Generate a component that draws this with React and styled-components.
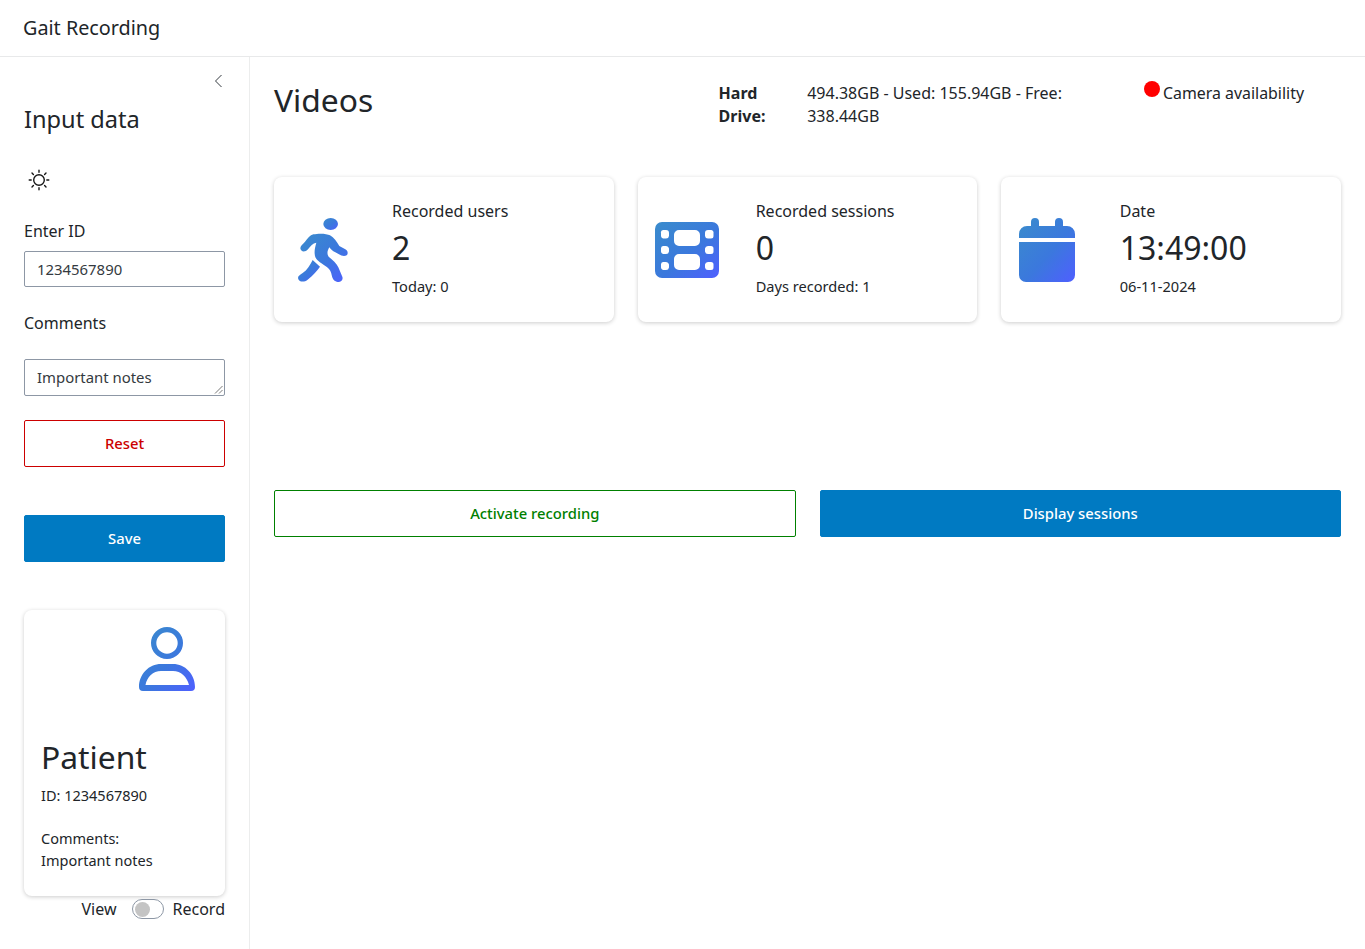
import React from "react";
import styled, { createGlobalStyle } from "styled-components";

const Global = createGlobalStyle`
  html, body { margin: 0; padding: 0; background: #fff; }
  body { font-family: "Noto Sans", "Open Sans", sans-serif; color: #212529; font-size: 16px; line-height: 24px; }
  * { box-sizing: border-box; }
`;

const Page = styled.div`
  width: 1365px; height: 949px; display: flex; flex-direction: column; overflow: hidden;
`;
const TopBar = styled.header`
  height: 57px; flex: none; border-bottom: 1px solid #e8e9ea; padding: 14px 0 0 23px;
  font-size: 19.8px; line-height: 27px;
`;
const Body = styled.div`
  flex: 1; display: flex; min-height: 0;
`;
const Sidebar = styled.aside`
  width: 250px; flex: none; border-right: 1px solid #eceded; padding: 14px 24px 0 24px; display: flex; flex-direction: column;
`;
const Collapse = styled.button`
  all: unset; align-self: flex-end; width: 14px; height: 20px; margin-right: -1px; display: flex; color: #343a40;
`;
const SideTitle = styled.h2`
  margin: 12px 0 0; font-size: 23.6px; line-height: 32px; font-weight: 400;
`;
const ThemeIcon = styled.div`
  margin: 34px 0 0 4px; height: 22px; width: 22px; color: #161616;
`;
const FieldLabel = styled.label`
  display: block; line-height: 24px; margin-top: ${p => p.$top}px;
`;
const TextInput = styled.div`
  height: ${p => p.$h}px; margin-top: ${p => p.$top}px; border: 1px solid #8d97a5; border-radius: 2px;
  padding: ${p => p.$py}px 12px; font-size: 14.9px; line-height: 20px; color: #343a40; position: relative;
`;
const Grip = styled.svg`
  position: absolute; right: 1px; bottom: 1px; width: 9px; height: 9px;
`;
const ActionButton = styled.button`
  display: flex; align-items: center; justify-content: center; width: 100%; height: 47px;
  margin-top: ${p => p.$top || 0}px; font: 500 14.8px/20px "Noto Sans", sans-serif; border-radius: 2px;
  border: 1px solid ${p => p.$color}; padding: 0 0 2px;
  background: ${p => (p.$solid ? p.$color : "#fff")};
  color: ${p => (p.$solid ? "#fff" : p.$color)};
`;
const PatientCard = styled.section`
  margin-top: 48px; height: 286px; border-radius: 8px; background: #fff;
  box-shadow: 0 1px 4px rgba(0,0,0,.2); padding: 17px 17px 0; display: flex; flex-direction: column;
`;
const PatientIconWrap = styled.div`
  height: 65px; margin-left: -2px; padding-left: 100px;
  svg { display: block; }
`;
const PatientName = styled.div`
  margin-top: 43px; font-size: 31.8px; line-height: 44px;
`;
const PatientText = styled.div`
  font-size: 14.5px; line-height: 22px; margin-top: ${p => p.$top}px;
`;
const ToggleRow = styled.div`
  display: flex; justify-content: flex-end; align-items: center; gap: 15px; height: 26px;
`;
const ToggleTrack = styled.span`
  width: 32px; height: 20px; border: 1px solid #8d97a5; border-radius: 10px; display: flex; align-items: center; padding-left: 2px; margin: 0 -6px 0 0;
`;
const ToggleKnob = styled.span`
  width: 15px; height: 15px; border-radius: 50%; background: #c4c4c4;
`;
const Main = styled.main`
  flex: 1; padding: 24px 24px 0; min-width: 0;
`;
const Header = styled.div`
  display: grid; grid-template-columns: 444.6px 425.4px 1fr; height: 96px;
`;
const PageTitle = styled.h1`
  margin: -1px 0 0; font-size: 31.8px; line-height: 40px; font-weight: 400;
`;
const Drive = styled.div`
  display: grid; grid-template-columns: 88.6px 270px; line-height: 23px; margin-top: 1px;
`;
const DriveLabel = styled.b` font-weight: 700; `;
const Camera = styled.div`
  display: flex; align-items: flex-start; line-height: 24px; font-size: 15.9px;
`;
const Dot = styled.span`
  width: 16px; height: 16px; border-radius: 50%; background: #ff0000; flex: none; margin: 0 3px 0 0;
`;
const Cards = styled.div`
  display: grid; grid-template-columns: repeat(3, 1fr); gap: 24px;
`;
const StatCard = styled.section`
  height: 145px; border-radius: 8px; background: #fff; box-shadow: 0 1px 4px rgba(0,0,0,.2);
  display: flex; padding: 22px 0 0 ${p => p.$left}px;
`;
const StatIcon = styled.div`
  width: ${p => p.$w}px; flex: none; padding-top: ${p => p.$top}px;
  svg { display: block; }
`;
const StatBody = styled.div`
  display: flex; flex-direction: column;
`;
const StatTitle = styled.div` line-height: 24px; `;
const StatValue = styled.div` font-size: 32px; line-height: 44px; margin-top: 3px; `;
const StatSub = styled.div` font-size: 14.6px; line-height: 20px; margin-top: 6px; `;
const Actions = styled.div`
  display: grid; grid-template-columns: 1fr 1fr; gap: 24px; margin-top: 168px;
`;

const Grad = ({ id, x1 = 0, y1 = 0, x2 = 1, y2 = 1 }) => (
  <linearGradient id={id} x1={x1} y1={y1} x2={x2} y2={y2}>
    <stop offset="0" stopColor="#3a8ccc" />
    <stop offset="0.55" stopColor="#3b78dd" />
    <stop offset="1" stopColor="#4f5fff" />
  </linearGradient>
);

const Sun = () => (
  <svg width="22" height="22" viewBox="0 0 22 22" fill="none" stroke="currentColor" strokeWidth="1.4" strokeLinecap="round">
    <circle cx="11" cy="11" r="5.3" />
    <path d="M11 1.2v2M11 18.8v2M1.2 11h2M18.8 11h2M4 4l1.4 1.4M16.6 16.6L18 18M4 18l1.4-1.4M16.6 5.4L18 4" />
  </svg>
);

const WalkIcon = () => (
  <svg width="53.33" height="66.67" viewBox="78 141 160 200">
    <defs><Grad id="gw" /></defs>
    <g fill="url(#gw)">
      <ellipse cx="182" cy="162" rx="22" ry="18" />
      <path d="M130 193 C145 190 170 190 180 196 C192 202 200 215 208 228 L226 238 C236 243 236 258 222 258 C215 258 205 252 196 247 C187 243 183 238 178 232 C172 242 170 252 176 260 C188 270 200 280 205 292 L217 320 C221 332 210 338 200 335 C190 332 187 325 185 315 C182 300 178 296 165 287 C150 277 138 270 135 258 C132 245 135 232 139 218 C128 220 122 228 114 238 C105 248 92 246 91 235 C91 228 97 224 105 215 C113 205 120 196 130 193 Z" />
      <path d="M128 270 L150 290 C142 302 130 315 112 330 C102 338 85 336 84 324 C84 318 90 314 98 309 C112 300 120 285 128 270Z" />
    </g>
  </svg>
);

const FilmIcon = () => (
  <svg width="66" height="72" viewBox="0 0 66 72">
    <defs><Grad id="gf" /></defs>
    <path
      fillRule="evenodd"
      fill="url(#gf)"
      d="M7 8h50a7 7 0 0 1 7 7v42a7 7 0 0 1-7 7H7a7 7 0 0 1-7-7V15a7 7 0 0 1 7-7z
         M8 16a2.500 2.500 0 0 0-2 3v3a2.500 2.500 0 0 0 2 2.500h3a3 3 0 0 0 3-2.500v-3a3 3 0 0 0-3-3z
         M8 32a2.500 2.500 0 0 0-2 2.500v3a2.500 2.500 0 0 0 2 2.500h3a3 3 0 0 0 3-2.500v-3a3 3 0 0 0-3-2.500z
         M8 48a2.500 2.500 0 0 0-2 2.500v3a2.500 2.500 0 0 0 2 2.500h3a3 3 0 0 0 3-2.500v-3a3 3 0 0 0-3-2.500z
         M53 16a3 3 0 0 0-3 3v3a3 3 0 0 0 3 2.500h3a2.500 2.500 0 0 0 2.500-2.500v-3a2.500 2.500 0 0 0-2.500-3z
         M53 32a3 3 0 0 0-3 2.500v3a3 3 0 0 0 3 2.500h3a2.500 2.500 0 0 0 2.500-2.500v-3a2.500 2.500 0 0 0-2.500-2.500z
         M53 48a3 3 0 0 0-3 2.500v3a3 3 0 0 0 3 2.500h3a2.500 2.500 0 0 0 2.500-2.500v-3a2.500 2.500 0 0 0-2.500-2.500z
         M24 16a5 5 0 0 0-5 5v6a5 5 0 0 0 5 5h16a5 5 0 0 0 5-5v-6a5 5 0 0 0-5-5z
         M24 40a5 5 0 0 0-5 5v6a5 5 0 0 0 5 5h16a5 5 0 0 0 5-5v-6a5 5 0 0 0-5-5z"
    />
  </svg>
);

const CalendarIcon = () => (
  <svg width="56" height="72" viewBox="0 0 56 72">
    <defs><Grad id="gc" /></defs>
    <path
      fill="url(#gc)"
      d="M12 6a4 4 0 0 1 8 0v4h16V6a4 4 0 0 1 8 0v4h4a8 8 0 0 1 8 8v4H0v-4a8 8 0 0 1 8-8h4z
         M0 26h56v33a7 7 0 0 1-7 7H7a7 7 0 0 1-7-7z"
    />
  </svg>
);

const PersonIcon = () => (
  <svg width="57" height="65" viewBox="0 0 57 65" fill="none">
    <defs><Grad id="gp" /></defs>
    <path
      fill="url(#gp)"
      fillRule="evenodd"
      d="M28 0a16 16 0 1 1 0 32 16 16 0 0 1 0-32zM28 5.300a10.700 10.700 0 1 0 0 21.400 10.700 10.700 0 0 0 0-21.400z
         M0 60C0 47 10 37 22 37h12C46 37 56 47 56 60q0 4-4 4H4q-4 0-4-4z
         M6.500 58H50C48 50 42 44 34 44H22C14 44 8 50 6.500 58z"
    />
  </svg>
);

export default function App() {
  return (
    <Page>
      <Global />
      <TopBar>Gait Recording</TopBar>
      <Body>
        <Sidebar>
          <Collapse aria-label="Collapse">
            <svg width="14" height="20" viewBox="0 0 14 20" fill="none" stroke="currentColor" strokeWidth="1">
              <path d="M9.500 4L3.500 10l6 6" />
            </svg>
          </Collapse>
          <SideTitle>Input data</SideTitle>
          <ThemeIcon><Sun /></ThemeIcon>
          <FieldLabel $top={28}>Enter ID</FieldLabel>
          <TextInput $h={36} $top={8} $py={7}>1234567890</TextInput>
          <FieldLabel $top={24}>Comments</FieldLabel>
          <TextInput $h={37} $top={24} $py={7}>
            Important notes
            <Grip viewBox="0 0 9 9" stroke="#555" strokeWidth="0.8"><path d="M1 8.500L8.500 1M5 8.500L8.500 5" /></Grip>
          </TextInput>
          <ActionButton $top={24} $color="#cc0000">Reset</ActionButton>
          <ActionButton $top={48} $color="#007ac2" $solid>Save</ActionButton>
          <PatientCard>
            <PatientIconWrap><PersonIcon /></PatientIconWrap>
            <PatientName>Patient</PatientName>
            <PatientText $top={5}>ID: 1234567890</PatientText>
            <PatientText $top={21}>Comments:<br />Important notes</PatientText>
          </PatientCard>
          <ToggleRow>
            <span>View</span>
            <ToggleTrack><ToggleKnob /></ToggleTrack>
            <span>Record</span>
          </ToggleRow>
        </Sidebar>
        <Main>
          <Header>
            <PageTitle>Videos</PageTitle>
            <Drive>
              <DriveLabel>Hard Drive:</DriveLabel>
              <span>494.38GB - Used: 155.94GB - Free: 338.44GB</span>
            </Drive>
            <Camera><Dot /><span>Camera availability</span></Camera>
          </Header>
          <Cards>
            <StatCard $left={22}>
              <StatIcon $w={96} $top={18}><WalkIcon /></StatIcon>
              <StatBody>
                <StatTitle>Recorded users</StatTitle>
                <StatValue>2</StatValue>
                <StatSub>Today: 0</StatSub>
              </StatBody>
            </StatCard>
            <StatCard $left={17}>
              <StatIcon $w={101} $top={15}><FilmIcon /></StatIcon>
              <StatBody>
                <StatTitle>Recorded sessions</StatTitle>
                <StatValue>0</StatValue>
                <StatSub>Days recorded: 1</StatSub>
              </StatBody>
            </StatCard>
            <StatCard $left={18}>
              <StatIcon $w={100.4} $top={17}><CalendarIcon /></StatIcon>
              <StatBody>
                <StatTitle>Date</StatTitle>
                <StatValue>13:49:00</StatValue>
                <StatSub>06-11-2024</StatSub>
              </StatBody>
            </StatCard>
          </Cards>
          <Actions>
            <ActionButton $color="#008000">Activate recording</ActionButton>
            <ActionButton $color="#007ac2" $solid>Display sessions</ActionButton>
          </Actions>
        </Main>
      </Body>
    </Page>
  );
}
